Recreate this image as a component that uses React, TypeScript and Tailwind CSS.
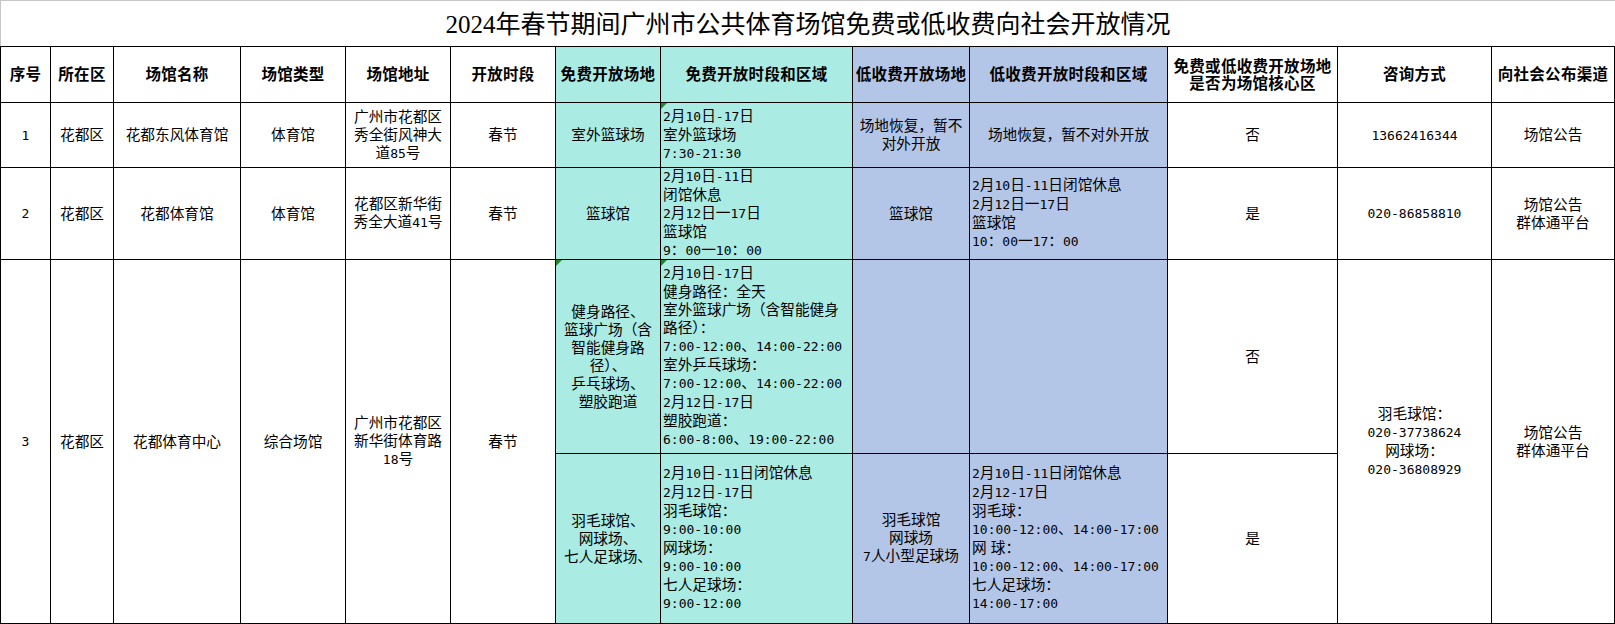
import React from "react";

type CellProps = {
  lines: string[];
  bg?: "white" | "cyan" | "blue";
  left?: boolean;
  header?: boolean;
  tri?: boolean;
  span2?: boolean;
};

function Line({ text, header }: { text: string; header: boolean }) {
  if (header) return <div>{text}</div>;
  const parts = text.split(/([\x21-\x7e][\x20-\x7e]*[\x21-\x7e]|[\x21-\x7e])/);
  return (
    <div>
      {parts.map((p, i) =>
        /^[\x20-\x7e]+$/.test(p) && p.trim() !== "" ? (
          <span key={i} className="font-['DejaVu_Sans_Mono',monospace] text-[13px]">
            {p}
          </span>
        ) : (
          <span key={i}>{p}</span>
        )
      )}
    </div>
  );
}

function Cell({ lines, bg = "white", left = false, header = false, tri = false, span2 = false }: CellProps) {
  const bgCls = bg === "cyan" ? "bg-[#aaebe3]" : bg === "blue" ? "bg-[#b4c6e7]" : "bg-white";
  const alignCls = left ? "items-start justify-center pl-[2px] text-left" : "items-center justify-center text-center";
  const textCls = header
    ? "font-bold text-[15.5px] leading-[17px] tracking-[0.3px]"
    : "font-normal text-[14.67px] leading-[18px]";
  return (
    <div
      className={`relative flex flex-col overflow-hidden whitespace-pre border-r border-b border-black text-black ${bgCls} ${alignCls} ${textCls} ${span2 ? "row-span-2" : ""}`}
    >
      {tri && (
        <span className="absolute left-0 top-0 h-0 w-0 border-t-[6px] border-r-[6px] border-t-[#1d8a2c] border-r-transparent" />
      )}
      {lines.map((l, i) => (
        <Line key={i} text={l} header={header} />
      ))}
    </div>
  );
}

export default function App() {
  return (
    <div className="w-[1615px] h-[624px] overflow-hidden bg-white font-['Liberation_Sans','Noto_Sans_CJK_SC',sans-serif]">
      <div className="flex h-[46px] items-center justify-center border-t border-l border-[#c6c6c6] pt-[1px] font-['Liberation_Serif','Noto_Sans_CJK_SC',serif] text-[25px] leading-none text-black">
        2024年春节期间广州市公共体育场馆免费或低收费向社会开放情况
      </div>
      <div className="grid grid-cols-[50px_63px_127px_105px_105px_105px_105px_192px_117px_198px_170px_154px_123px] grid-rows-[56px_65px_92px_194px_170px] border-t border-l border-black">
        {/* Header */}
        <Cell header lines={["序号"]} />
        <Cell header lines={["所在区"]} />
        <Cell header lines={["场馆名称"]} />
        <Cell header lines={["场馆类型"]} />
        <Cell header lines={["场馆地址"]} />
        <Cell header lines={["开放时段"]} />
        <Cell header bg="cyan" lines={["免费开放场地"]} />
        <Cell header bg="cyan" lines={["免费开放时段和区域"]} />
        <Cell header bg="blue" lines={["低收费开放场地"]} />
        <Cell header bg="blue" lines={["低收费开放时段和区域"]} />
        <Cell header lines={["免费或低收费开放场地", "是否为场馆核心区"]} />
        <Cell header lines={["咨询方式"]} />
        <Cell header lines={["向社会公布渠道"]} />

        {/* Row 1 */}
        <Cell lines={["1"]} />
        <Cell lines={["花都区"]} />
        <Cell lines={["花都东风体育馆"]} />
        <Cell lines={["体育馆"]} />
        <Cell lines={["广州市花都区", "秀全街风神大", "道85号"]} />
        <Cell lines={["春节"]} />
        <Cell bg="cyan" lines={["室外篮球场"]} />
        <Cell bg="cyan" left tri lines={["2月10日-17日", "室外篮球场", "7:30-21:30"]} />
        <Cell bg="blue" lines={["场地恢复，暂不", "对外开放"]} />
        <Cell bg="blue" lines={["场地恢复，暂不对外开放"]} />
        <Cell lines={["否"]} />
        <Cell lines={["13662416344"]} />
        <Cell lines={["场馆公告"]} />

        {/* Row 2 */}
        <Cell lines={["2"]} />
        <Cell lines={["花都区"]} />
        <Cell lines={["花都体育馆"]} />
        <Cell lines={["体育馆"]} />
        <Cell lines={["花都区新华街", "秀全大道41号"]} />
        <Cell lines={["春节"]} />
        <Cell bg="cyan" lines={["篮球馆"]} />
        <Cell bg="cyan" left lines={["2月10日-11日", "闭馆休息", "2月12日一17日", "篮球馆", "9：00一10：00"]} />
        <Cell bg="blue" lines={["篮球馆"]} />
        <Cell bg="blue" left lines={["2月10日-11日闭馆休息", "2月12日一17日", "篮球馆", "10：00一17：00"]} />
        <Cell lines={["是"]} />
        <Cell lines={["020-86858810"]} />
        <Cell lines={["场馆公告", "群体通平台"]} />

        {/* Row 3a */}
        <Cell span2 lines={["3"]} />
        <Cell span2 lines={["花都区"]} />
        <Cell span2 lines={["花都体育中心"]} />
        <Cell span2 lines={["综合场馆"]} />
        <Cell span2 lines={["广州市花都区", "新华街体育路", "18号"]} />
        <Cell span2 lines={["春节"]} />
        <Cell bg="cyan" tri lines={["健身路径、", "篮球广场（含", "智能健身路", "径）、", "乒乓球场、", "塑胶跑道"]} />
        <Cell
          bg="cyan"
          left
          tri
          lines={[
            "2月10日-17日",
            "健身路径：全天",
            "室外篮球广场（含智能健身",
            "路径）：",
            "7:00-12:00、14:00-22:00",
            "室外乒乓球场：",
            "7:00-12:00、14:00-22:00",
            "2月12日-17日",
            "塑胶跑道：",
            "6:00-8:00、19:00-22:00",
          ]}
        />
        <Cell bg="blue" lines={[]} />
        <Cell bg="blue" lines={[]} />
        <Cell lines={["否"]} />
        <Cell span2 lines={["羽毛球馆：", "020-37738624", "网球场：", "020-36808929"]} />
        <Cell span2 lines={["场馆公告", "群体通平台"]} />

        {/* Row 3b */}
        <Cell bg="cyan" lines={["羽毛球馆、", "网球场、", "七人足球场、"]} />
        <Cell
          bg="cyan"
          left
          lines={["2月10日-11日闭馆休息", "2月12日-17日", "羽毛球馆：", "9:00-10:00", "网球场：", "9:00-10:00", "七人足球场：", "9:00-12:00"]}
        />
        <Cell bg="blue" lines={["羽毛球馆", "网球场", "7人小型足球场"]} />
        <Cell
          bg="blue"
          left
          lines={[
            "2月10日-11日闭馆休息",
            "2月12-17日",
            "羽毛球：",
            "10:00-12:00、14:00-17:00",
            "网 球：",
            "10:00-12:00、14:00-17:00",
            "七人足球场：",
            "14:00-17:00",
          ]}
        />
        <Cell lines={["是"]} />
      </div>
    </div>
  );
}
